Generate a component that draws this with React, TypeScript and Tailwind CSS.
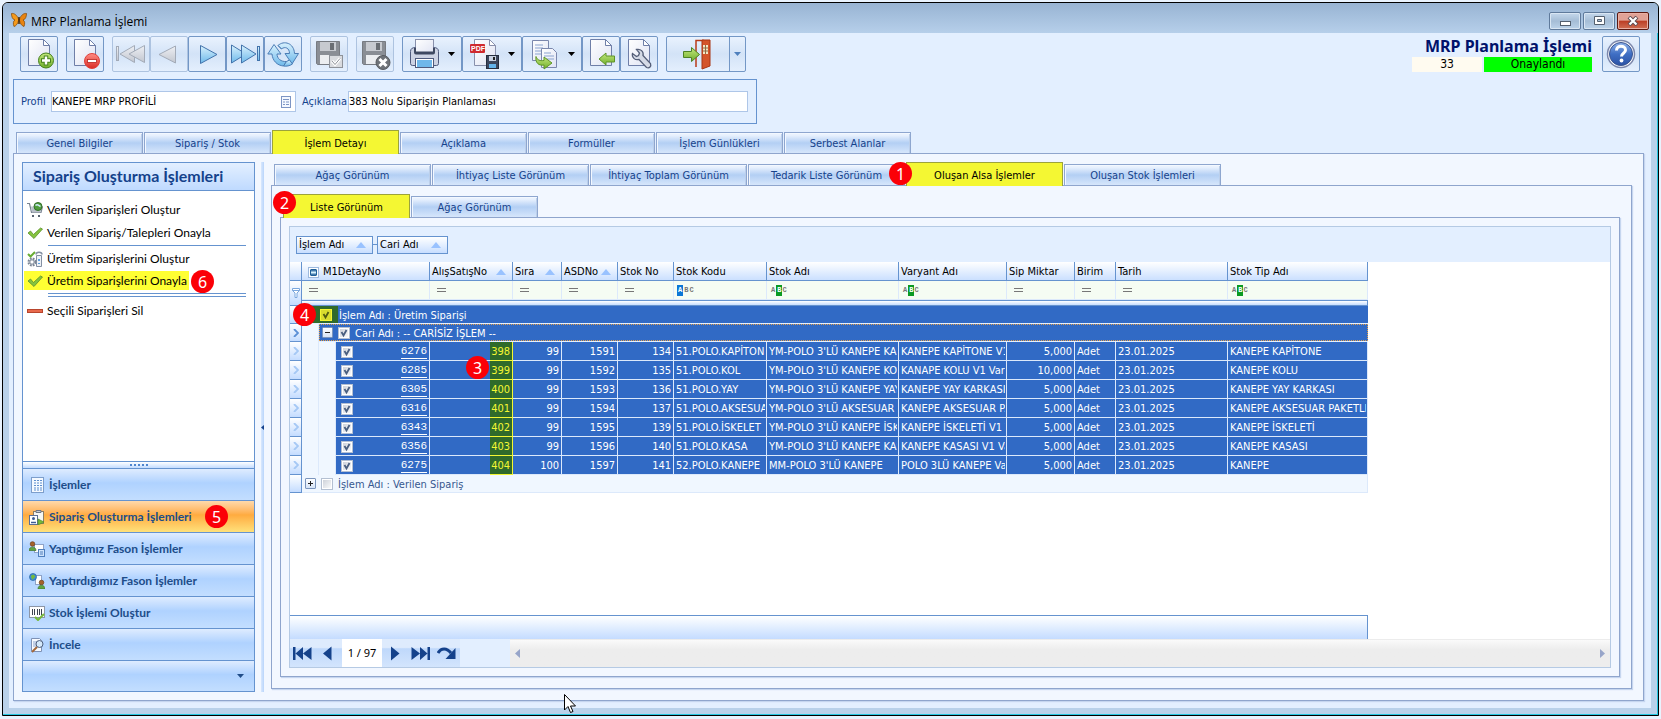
import { useState } from 'react'
import type { ReactNode } from 'react'
import clsx from 'clsx'

const mainTabs = [
  'Genel Bilgiler',
  'Sipariş / Stok',
  'İşlem Detayı',
  'Açıklama',
  'Formüller',
  'İşlem Günlükleri',
  'Serbest Alanlar',
]

const viewTabs = [
  'Ağaç Görünüm',
  'İhtiyaç Liste Görünüm',
  'İhtiyaç Toplam Görünüm',
  'Tedarik Liste Görünüm',
  'Oluşan Alsa İşlemler',
  'Oluşan Stok İşlemleri',
]

interface OrderRow {
  detayNo: number
  alisSatisNo: number
  sira: number
  asdNo: number
  stokNo: number
  stokKodu: string
  stokAdi: string
  varyant: string
  miktar: string
  tip: string
}

const rows: OrderRow[] = [
  { detayNo: 6276, alisSatisNo: 398, sira: 99, asdNo: 1591, stokNo: 134, stokKodu: '51.POLO.KAPİTON', stokAdi: "YM-POLO 3'LÜ KANEPE KAP", varyant: 'KANEPE KAPİTONE V1', miktar: '5,000', tip: 'KANEPE KAPİTONE' },
  { detayNo: 6285, alisSatisNo: 399, sira: 99, asdNo: 1592, stokNo: 135, stokKodu: '51.POLO.KOL', stokAdi: "YM-POLO 3'LÜ KANEPE KOL", varyant: 'KANAPE KOLU V1 Var', miktar: '10,000', tip: 'KANEPE KOLU' },
  { detayNo: 6305, alisSatisNo: 400, sira: 99, asdNo: 1593, stokNo: 136, stokKodu: '51.POLO.YAY', stokAdi: "YM-POLO 3'LÜ KANEPE YAY", varyant: 'KANEPE YAY KARKASI', miktar: '5,000', tip: 'KANEPE YAY KARKASI' },
  { detayNo: 6316, alisSatisNo: 401, sira: 99, asdNo: 1594, stokNo: 137, stokKodu: '51.POLO.AKSESUA', stokAdi: "YM-POLO 3'LÜ AKSESUAR Y", varyant: 'KANEPE AKSESUAR PA', miktar: '5,000', tip: 'KANEPE AKSESUAR PAKETLE' },
  { detayNo: 6343, alisSatisNo: 402, sira: 99, asdNo: 1595, stokNo: 139, stokKodu: '51.POLO.İSKELET', stokAdi: "YM-POLO 3'LÜ KANEPE İSK", varyant: 'KANEPE İSKELETİ V1 V', miktar: '5,000', tip: 'KANEPE İSKELETİ' },
  { detayNo: 6356, alisSatisNo: 403, sira: 99, asdNo: 1596, stokNo: 140, stokKodu: '51.POLO.KASA', stokAdi: "YM-POLO 3'LÜ KANEPE KAS", varyant: 'KANEPE KASASI V1 Va', miktar: '5,000', tip: 'KANEPE KASASI' },
  { detayNo: 6275, alisSatisNo: 404, sira: 100, asdNo: 1597, stokNo: 141, stokKodu: '52.POLO.KANEPE', stokAdi: "MM-POLO 3'LÜ KANEPE", varyant: 'POLO 3LÜ KANEPE Va', miktar: '5,000', tip: 'KANEPE' },
]

type FilterKind = 'eq' | 'starts' | 'contains'

const columns: { title: string; sorted?: boolean; filter: FilterKind }[] = [
  { title: 'AlışSatışNo', sorted: true, filter: 'eq' },
  { title: 'Sıra', sorted: true, filter: 'eq' },
  { title: 'ASDNo', sorted: true, filter: 'eq' },
  { title: 'Stok No', filter: 'eq' },
  { title: 'Stok Kodu', filter: 'starts' },
  { title: 'Stok Adı', filter: 'contains' },
  { title: 'Varyant Adı', filter: 'contains' },
  { title: 'Sip Miktar', filter: 'eq' },
  { title: 'Birim', filter: 'eq' },
  { title: 'Tarih', filter: 'eq' },
  { title: 'Stok Tip Adı', filter: 'contains' },
]

/* ---------- shared gradients for the drawings ---------- */

const Defs = () => (
  <svg width="0" height="0" className="absolute" aria-hidden="true">
    <defs>
      <linearGradient id="paper" x1="0" y1="0" x2="1" y2="1">
        <stop offset="0" stopColor="#ffffff" />
        <stop offset="1" stopColor="#dfe3f3" />
      </linearGradient>
      <linearGradient id="sky" x1="0" y1="0" x2="0" y2="1">
        <stop offset="0" stopColor="#d9f1fd" />
        <stop offset="1" stopColor="#6db9ea" />
      </linearGradient>
      <linearGradient id="ash" x1="0" y1="0" x2="0" y2="1">
        <stop offset="0" stopColor="#eef0f4" />
        <stop offset="1" stopColor="#c2c6cf" />
      </linearGradient>
      <linearGradient id="leaf" x1="0" y1="0" x2="0" y2="1">
        <stop offset="0" stopColor="#c4e87c" />
        <stop offset="1" stopColor="#6fae2c" />
      </linearGradient>
      <linearGradient id="rose" x1="0" y1="0" x2="0" y2="1">
        <stop offset="0" stopColor="#ff8d85" />
        <stop offset="1" stopColor="#d92b25" />
      </linearGradient>
      <linearGradient id="orb" x1="0" y1="0" x2="0" y2="1">
        <stop offset="0" stopColor="#8fb2ea" />
        <stop offset="0.5" stopColor="#3f6fc4" />
        <stop offset="1" stopColor="#2b52a4" />
      </linearGradient>
    </defs>
  </svg>
)

const Icon = ({ children }: { children: ReactNode }) => (
  <svg width="32" height="32" viewBox="0 0 32 32" fill="none" className="shrink-0" aria-hidden="true">
    {children}
  </svg>
)

const Page = () => (
  <>
    <path d="M5.500 1.500h15l6 6v20h-21z" fill="url(#paper)" stroke="#6f7fa8" />
    <path d="M20.500 1.500v6h6z" fill="#fff" stroke="#6f7fa8" strokeLinejoin="round" />
  </>
)

const NewIcon = () => (
  <Icon>
    <Page />
    <circle cx="23" cy="22.500" r="7.500" fill="url(#leaf)" stroke="#44801c" />
    <path d="M23 17.500v10M18 22.500h10" stroke="#47821f" strokeWidth="4.500" />
    <path d="M23 18.500v8M19 22.500h8" stroke="#fff" strokeWidth="2.500" />
  </Icon>
)

const DeleteIcon = () => (
  <Icon>
    <Page />
    <circle cx="23" cy="23" r="7.500" fill="url(#rose)" stroke="#e0403a" />
    <rect x="18.500" y="21.500" width="9" height="3" fill="#fff" stroke="#b8231f" strokeWidth="0.800" />
  </Icon>
)

const FirstIcon = () => (
  <Icon>
    <g fill="url(#ash)" stroke="#a3abb8">
      <rect x="1.500" y="8.500" width="2" height="14" />
      <path d="M19.500 7.500v17L5 16z" />
      <path d="M29.500 7.500v17L14 16z" />
    </g>
  </Icon>
)

const PrevIcon = () => (
  <Icon>
    <path d="M22.500 8v17L6 16.500z" fill="url(#ash)" stroke="#a3abb8" />
  </Icon>
)

const NextIcon = () => (
  <Icon>
    <path d="M9.500 7.500v18L26 16.500z" fill="url(#sky)" stroke="#4273ab" />
  </Icon>
)

const LastIcon = () => (
  <Icon>
    <g fill="url(#sky)" stroke="#4273ab">
      <path d="M2.500 7v18L17 16z" />
      <path d="M12.500 7v18L27 16z" />
      <rect x="28.500" y="8.500" width="2" height="14" />
    </g>
  </Icon>
)

const RefreshIcon = () => (
  <Icon>
    <g fill="url(#sky)" stroke="#4b7db5" strokeLinejoin="round">
      <path d="M7 6.500.8 16H5c.5 6.500 5 11.500 11.500 12l3-4.500C14 24 10 20.500 10 16h4z" />
      <path d="M11 7.500C17 2 27 5 27.500 15.500h4L25 26l-7-10.500h4.500C22.500 10 18 8 14.500 11z" />
      <path d="m16.500 28 3-4.500 3-1.500 3 4c-3 2-6 2.500-9 2z" />
      <path d="m11 7.500 3.500 3.500" />
    </g>
  </Icon>
)

const Floppy = () => (
  <>
    <path d="M3.500 3.500h23v22l-1 1h-21l-1-1z" fill="#8a8e95" stroke="#777b82" />
    <rect x="7" y="4" width="16" height="9" fill="#c7cad0" />
    <rect x="17" y="5" width="4" height="7" fill="#6a6e74" />
    <rect x="7" y="17" width="16" height="9" fill="#eceef1" />
  </>
)

const SaveIcon = () => (
  <Icon>
    <Floppy />
    <rect x="16.500" y="17.500" width="13" height="12" fill="#d9dbdf" stroke="#8e9299" />
    <path d="m19 23 3 3.500 5-6" stroke="#fff" strokeWidth="3" />
    <path d="m19 23 3 3.500 5-6" stroke="#8e9299" />
  </Icon>
)

const CancelSaveIcon = () => (
  <Icon>
    <Floppy />
    <circle cx="24" cy="24.500" r="7" fill="#6e7278" stroke="#585b60" />
    <path d="m20.500 21 7 7m0-7-7 7" stroke="#fff" strokeWidth="3" />
  </Icon>
)

const PrintIcon = () => (
  <Icon>
    <rect x="6.500" y="1.500" width="18" height="14" fill="url(#paper)" stroke="#8890ac" />
    <path d="M1.500 13.500q0-4 5-4v5h18v-5q5 0 5 4v12q0 2-2 2h-24q-2 0-2-2z" fill="#cdd3e4" stroke="#4f5a7d" />
    <path d="M5 10h2v3.500h17V10h2v4.500q0 2-2 2H7q-2 0-2-2z" fill="#3e4861" />
    <rect x="6.500" y="20.500" width="18" height="9" fill="#fff" stroke="#4f5a7d" />
    <rect x="8" y="22" width="15" height="7" fill="#6fb7ea" />
  </Icon>
)

const PdfIcon = () => (
  <Icon>
    <path d="M5.500 1.500h15l6 6v20h-21z" fill="url(#paper)" stroke="#8890ac" />
    <path d="M20.500 1.500v6h6z" fill="#fff" stroke="#8890ac" />
    <rect x="1" y="6" width="15" height="9" rx="1" fill="#cf2a2f" />
    <text x="2" y="13" fontSize="7" fontWeight="700" fill="#fff" fontFamily="Liberation Sans, sans-serif">PDF</text>
    <rect x="17.500" y="17.500" width="12" height="13" fill="#3c475d" stroke="#252d3d" />
    <rect x="20" y="18" width="7" height="5" fill="#c9d2e2" />
    <rect x="24" y="19" width="2" height="3" fill="#222" />
    <rect x="20" y="26" width="7" height="4" fill="#63b3ea" />
  </Icon>
)

const CopyIcon = () => (
  <Icon>
    <path d="M3.500 2.500h16v20h-16z" fill="url(#paper)" stroke="#7b87ad" />
    <path d="M6 7h8M6 10h8M6 13h6M6 16h6" stroke="#8aa3cf" />
    <path d="M12.500 10.500h11l4 4v15h-15z" fill="url(#paper)" stroke="#7b87ad" />
    <path d="M15 15h7M15 18h10M15 21h10" stroke="#8aa3cf" />
    <path d="M7 18.500c1 4 5 4.500 8 4V19l8 6-8 6v-4c-5 1-9-2-8-8.500z" fill="url(#leaf)" stroke="#5e9426" />
  </Icon>
)

const ImportIcon = () => (
  <Icon>
    <Page />
    <path d="m14 21 7-6v3h8.500v6H21v3z" fill="url(#leaf)" stroke="#5e9426" />
  </Icon>
)

const WrenchIcon = () => (
  <Icon>
    <Page />
    <path
      d="M13.500 11.500c4-1 7.500 2 6.500 6l7.500 8c1 3-1 5-4 4l-7.500-8c-4 1-7.500-2-6.500-6l4 3 2-1 1-2.500z"
      fill="#d5dae6"
      stroke="#545e78"
      strokeWidth="1.300"
    />
  </Icon>
)

const ExitIcon = () => (
  <Icon>
    <path d="M14 29V2.500h8" stroke="#b83a17" strokeWidth="1.500" />
    <path d="M20 2h8v26l-8 3z" fill="#d4542a" stroke="#a83413" />
    <path d="M21 7h5v9h-5z" fill="#f4e5c4" />
    <path d="M23.500 7v9M21 10h5M21 13h5" stroke="#8d6b45" />
    <path d="M1.500 13.500h8v-4l8 7-8 7v-4h-8z" fill="url(#leaf)" stroke="#4d8224" />
  </Icon>
)

const HelpIcon = () => (
  <Icon>
    <circle cx="16" cy="16" r="13.500" fill="#fff" stroke="#7d88ac" strokeWidth="1.500" />
    <circle cx="16" cy="16" r="11.500" fill="url(#orb)" stroke="#3b558f" />
    <path d="M11.500 12.500c0-6 9-5.500 9-.5 0 3.500-4 3-4 6.500" stroke="#fff" strokeWidth="3" />
    <circle cx="16.500" cy="22.500" r="1.900" fill="#fff" />
  </Icon>
)

/* ---------- sidebar icons (16px) ---------- */

const Small = ({ children }: { children: ReactNode }) => (
  <svg width="16" height="16" viewBox="0 0 16 16" fill="none" className="shrink-0" aria-hidden="true">
    {children}
  </svg>
)

const CartIcon = () => (
  <Small>
    <path d="M0 1.500h2.500l2 9h9.500l1.500-6" stroke="#7a8491" strokeWidth="1.200" />
    <path d="M4 4.500h11l-1.500 6H5z" fill="#b9c0ca" />
    <circle cx="11" cy="4.500" r="4" fill="#4f9e3c" stroke="#356d2b" />
    <path d="M8.500 3.500c2-2 3 0 5 1" stroke="#cfeaf9" strokeWidth="1.500" />
    <rect x="5" y="13" width="2" height="2" fill="#55606f" />
    <rect x="11" y="13" width="2" height="2" fill="#55606f" />
  </Small>
)

const TickIcon = () => (
  <Small>
    <path d="m1 8 2.500-2 3 3.500L13.500 3l2 1-8.500 9.500z" fill="#86c440" stroke="#5a8f2b" strokeWidth="0.800" />
  </Small>
)

const GearListIcon = () => (
  <Small>
    <circle cx="5" cy="11" r="3.500" stroke="#7a8594" strokeWidth="2" strokeDasharray="1.800 1" />
    <circle cx="5" cy="11" r="2.200" stroke="#7a8594" />
    <path d="m1 3 2.500 2.500L8 1" stroke="#68ac33" strokeWidth="2" />
    <path d="M9.500 4.500h5v11h-5z" fill="#eef1f6" stroke="#8490a3" />
    <path d="M9 3.500c0-3 6-3 6 0" stroke="#8490a3" strokeWidth="1.500" />
    <path d="M11 8h2v2h-2zM11 12h2v1h-2z" fill="#5d9fdf" />
  </Small>
)

const MinusIcon = () => (
  <Small>
    <rect x="0.500" y="6.500" width="15" height="3" fill="#e8694c" stroke="#b8452d" />
  </Small>
)

const ListIcon = () => (
  <Small>
    <rect x="2.500" y="0.500" width="12" height="15" fill="#f4f9ff" stroke="#7d9ecb" />
    <path d="M5 3.500h8M5 6h8M5 8.500h8M5 11h8M5 13h8" stroke="#5f8fcf" strokeDasharray="2 1" />
  </Small>
)

const ClipboardIcon = () => (
  <Small>
    <rect x="4.500" y="2.500" width="10" height="12" fill="#f6f6f2" stroke="#8b7d63" />
    <path d="M7 3.500V1.500h5v2z" fill="#c9ccd3" stroke="#6e7686" />
    <rect x="0.500" y="6.500" width="8" height="9" fill="#fff" stroke="#5c6f94" />
    <circle cx="4.500" cy="9.500" r="1.500" fill="#3d5d94" />
    <path d="M2 13.500h5" stroke="#3d5d94" strokeWidth="1.500" />
    <path d="m9 10 6 3-6 3z" fill="#76b93b" stroke="#4e8b25" strokeWidth="0.700" />
  </Small>
)

const PersonDocIcon = () => (
  <Small>
    <rect x="5.500" y="3.500" width="9" height="8" fill="#fff" stroke="#8fa3c7" />
    <circle cx="3.500" cy="3" r="2.300" fill="#a5622b" stroke="#6f3d17" strokeWidth="0.700" />
    <path d="M0 9.500C0 5 7 5 7 9.500z" fill="#5fa542" stroke="#3e7629" strokeWidth="0.700" />
    <rect x="9.500" y="8.500" width="6" height="7" fill="#cfe3fb" stroke="#4f7fbd" />
    <path d="M11 11h3M11 13h3" stroke="#4f7fbd" />
  </Small>
)

const GlobePersonIcon = () => (
  <Small>
    <rect x="6.500" y="2.500" width="6" height="9" fill="#fff" stroke="#8fa3c7" />
    <circle cx="4" cy="4" r="3.500" fill="#3d8dd8" stroke="#26629f" strokeWidth="0.700" />
    <path d="M2 3c2-2 3-1 4 0s-2 2-2 4c-1-1-2-2-2-4z" fill="#76b93b" />
    <circle cx="12.500" cy="9.500" r="2.300" fill="#a5622b" stroke="#6f3d17" strokeWidth="0.700" />
    <path d="M9 16c0-5 7-5 7 0z" fill="#5fa542" stroke="#3e7629" strokeWidth="0.700" />
  </Small>
)

const BarcodeIcon = () => (
  <Small>
    <rect x="0.500" y="1.500" width="15" height="11" fill="#fff" stroke="#8d96a6" />
    <path d="M3.500 4v6M5.500 4v6M8.500 4v6M10.500 4v6M12.500 4v6" stroke="#3c4350" />
    <path d="m6 12 3 3 6-6" stroke="#76b93b" strokeWidth="2" />
  </Small>
)

const MagnifyIcon = () => (
  <Small>
    <path d="M2.500 1.500h8l2 2v11h-10z" fill="#f7faff" stroke="#7f92b5" />
    <path d="M4 5h4M4 7h3M4 9h3" stroke="#8fa7cf" />
    <circle cx="10.500" cy="7" r="3.500" fill="#d5e9fb" stroke="#4c5d7d" />
    <path d="m8 10-5 5" stroke="#a3673a" strokeWidth="2" />
  </Small>
)

/* ---------- small parts ---------- */

const Marker = ({ n, className }: { n: number; className: string }) => (
  <span
    className={clsx(
      "absolute z-20 flex h-[23px] w-[23px] items-center justify-center rounded-full bg-[#fb0007] font-['Noto_Sans',sans-serif] text-[16px] leading-none font-normal text-white",
      className
    )}
  >
    {n}
  </span>
)

const Caret = ({ color = '#000' }: { color?: string }) => (
  <svg width="7" height="4" viewBox="0 0 7 4" className="shrink-0" aria-hidden="true">
    <path d="M0 0h7L3.500 4z" fill={color} />
  </svg>
)

const SortArrow = () => (
  <svg width="10" height="6" viewBox="0 0 10 6" className="shrink-0" aria-hidden="true">
    <path d="M0 6h10L5 0z" fill="#99c2ff" />
  </svg>
)

interface ToolButtonProps {
  label: string
  children: ReactNode
  disabled?: boolean
  wide?: boolean
}

const ToolButton = ({ label, children, disabled, wide }: ToolButtonProps) => (
  <button
    type="button"
    aria-label={label}
    disabled={disabled}
    className={clsx(
      'flex h-9 items-center justify-center rounded-[2px] border bg-linear-to-b from-[#e9f2fe] via-[#d3e3f7] to-[#e4effd]',
      wide ? 'w-[60px] gap-[7px]' : 'w-[38px]',
      disabled ? 'border-[#adc3e0]' : 'border-[#7397c6]'
    )}
  >
    {children}
    {wide && <Caret />}
  </button>
)

interface TabProps {
  label: string
  active: boolean
  onClick: () => void
  wide?: boolean
}

const Tab = ({ label, active, onClick, wide }: TabProps) => (
  <button
    type="button"
    role="tab"
    aria-selected={active}
    onClick={onClick}
    className={clsx(
      'shrink-0 border border-b-0 pt-[2px] text-center',
      wide ? 'w-[157px]' : 'w-[127px]',
      active
        ? 'relative -mb-px h-6 border-[#9ca33c] bg-[#f4f733] text-black'
        : 'h-[21px] border-[#8ea6cf] bg-linear-to-b from-[#eaf2fe] from-10% via-[#b3cff4] via-50% to-[#d6e6fb] text-[#15428b] shadow-[inset_1px_1px_0_#f3f8ff,inset_-1px_0_0_#bccfea]'
    )}
  >
    {label}
  </button>
)

interface CheckProps {
  label: string
  checked?: boolean
  yellow?: boolean
}

const Check = ({ label, checked = false, yellow }: CheckProps) => (
  <span className="relative block h-3 w-3 shrink-0">
    <input
      type="checkbox"
      aria-label={label}
      defaultChecked={checked}
      className={clsx(
        'peer block h-3 w-3 appearance-none border',
        yellow
          ? 'border-[#f4f733] bg-[#d9dc2e]'
          : 'border-[#b4c0d2] bg-linear-to-br from-[#c9ced6] to-white shadow-[inset_0_0_0_1px_#fff]'
      )}
    />
    <svg viewBox="0 0 12 12" className="pointer-events-none absolute inset-0 hidden peer-checked:block" aria-hidden="true">
      <path d="m3.500 5 2 3.500L8.500 3" stroke={yellow ? '#4f5a12' : '#4a5f80'} strokeWidth="1.800" fill="none" />
    </svg>
  </span>
)

const FilterMark = ({ kind }: { kind: FilterKind }) => {
  if (kind === 'eq') {
    return (
      <svg width="9" height="4" viewBox="0 0 9 4" className="ml-[7px]" aria-hidden="true">
        <path d="M0 .5h9M0 3.500h9" stroke="#777" />
      </svg>
    )
  }
  return (
    <span className="ml-[3px] flex items-center font-['Liberation_Mono',monospace] text-[7px] leading-[11px] font-bold text-[#777]">
      <span className={clsx('px-px', kind === 'starts' && 'bg-[#0b77d6] text-white')}>A</span>
      <span className={clsx('px-px', kind === 'contains' && 'bg-[#0a9a22] text-white')}>B</span>
      <span>C</span>
    </span>
  )
}

const Chevron = ({ current }: { current?: boolean }) => (
  <svg width="6" height="8" viewBox="0 0 6 8" className="mx-auto" aria-hidden="true">
    <path d="m1 0 4 4-4 4" stroke={current ? '#5b8fd6' : '#a5c8f5'} strokeWidth="1.800" fill="none" />
  </svg>
)

const Indicator = ({ arrow, current }: { arrow?: boolean; current?: boolean }) => (
  <td className="border-r border-b border-[#6593cf] bg-linear-to-b from-white to-[#c4dcff]">
    {arrow && <Chevron current={current} />}
  </td>
)

const Expander = ({ open }: { open?: boolean }) => (
  <button
    type="button"
    aria-label={open ? 'Daralt' : 'Genişlet'}
    className="flex h-[11px] w-[11px] shrink-0 items-center justify-center rounded-[1px] border border-[#7b95bd] bg-linear-to-b from-white to-[#d5e3f6]"
  >
    <svg width="7" height="7" viewBox="0 0 7 7" aria-hidden="true">
      <path d={open ? 'M1 3.500h5' : 'M1 3.500h5M3.500 1v5'} stroke="#222" />
    </svg>
  </button>
)

/* ---------- window sections ---------- */

const captionButton =
  'flex h-[18px] w-8 items-center justify-center rounded-[2px] border border-[#5f7a9b] bg-linear-to-b from-[#c5d8ec] via-[#a5bdd6] to-[#bcd3ea] shadow-[inset_0_0_0_1px_#d9e6f3]'

const TitleBar = () => (
  <header className="flex h-[30px] shrink-0 items-center bg-linear-to-b from-[#98b4d3] to-[#b6cfea] pl-2">
    <svg width="16" height="16" viewBox="0 0 16 16" className="mt-1" aria-hidden="true">
      <path d="M7.500 7C6 3 3 1 .5 1.500c0 3 1 6 3.500 6.500-2 1-2 4-1 6.500 2-.5 4-3 4.500-6z" fill="#f59a1b" stroke="#8a4c08" strokeWidth="0.800" />
      <path d="M8.500 7c1.500-4 4.500-6 7-5.500 0 3-1 6-3.500 6.500 2 1 2 4 1 6.500-2-.5-4-3-4.500-6z" fill="#e98410" stroke="#8a4c08" strokeWidth="0.800" />
      <path d="M8 5v7" stroke="#4b2803" strokeWidth="1.500" />
    </svg>
    <h1 className="ml-1 pt-2 font-['Open_Sans',sans-serif] text-[12px] text-black">MRP Planlama İşlemi</h1>
    <div className="mr-[9px] ml-auto flex gap-[2px] pt-[5px]">
      <button type="button" aria-label="Küçült" className={captionButton}>
        <svg width="11" height="12" viewBox="0 0 11 12"><rect x="0.500" y="6.500" width="10" height="4" fill="#fff" stroke="#54606f" /></svg>
      </button>
      <button type="button" aria-label="Ekranı Kapla" className={captionButton}>
        <svg width="11" height="9" viewBox="0 0 11 9"><path d="M.5.5h10v8H.5zM3.500 3.500h4v2h-4z" fill="#fff" fillRule="evenodd" stroke="#54606f" /></svg>
      </button>
      <button type="button" aria-label="Kapat" className="flex h-[18px] w-8 items-center justify-center rounded-[2px] border border-[#5c1a12] bg-linear-to-b from-[#e0a296] from-45% via-[#bb3d24] via-50% to-[#cf6d52] shadow-[inset_0_0_0_1px_#e9b0a4]">
        <svg width="12" height="10" viewBox="0 0 12 10">
          <path d="m2 1 8 8M10 1 2 9" stroke="#5d4a50" strokeWidth="4" />
          <path d="m2.500 1.500 7 7M9.500 1.500l-7 7" stroke="#fff" strokeWidth="2.200" />
        </svg>
      </button>
    </div>
  </header>
)

const Toolbar = () => (
  <div className="flex items-start gap-2 pr-1 pl-[7px]">
    <ToolButton label="Yeni"><NewIcon /></ToolButton>
    <ToolButton label="Sil"><DeleteIcon /></ToolButton>
    <div className="flex">
      <ToolButton label="İlk" disabled><FirstIcon /></ToolButton>
      <ToolButton label="Önceki" disabled><PrevIcon /></ToolButton>
      <ToolButton label="Sonraki"><NextIcon /></ToolButton>
      <ToolButton label="Son"><LastIcon /></ToolButton>
      <ToolButton label="Yenile"><RefreshIcon /></ToolButton>
    </div>
    <ToolButton label="Kaydet" disabled><SaveIcon /></ToolButton>
    <ToolButton label="Vazgeç" disabled><CancelSaveIcon /></ToolButton>
    <div className="flex">
      <ToolButton label="Yazdır" wide><PrintIcon /></ToolButton>
      <ToolButton label="PDF Kaydet" wide><PdfIcon /></ToolButton>
      <ToolButton label="Kopyala" wide><CopyIcon /></ToolButton>
      <ToolButton label="İçeri Al"><ImportIcon /></ToolButton>
      <ToolButton label="Ayarlar"><WrenchIcon /></ToolButton>
    </div>
    <div className="flex h-9 rounded-[2px] border border-[#7397c6] bg-linear-to-b from-[#e9f2fe] via-[#d3e3f7] to-[#e4effd]">
      <button type="button" aria-label="Çıkış" className="flex w-[62px] items-center justify-center"><ExitIcon /></button>
      <button type="button" aria-label="Çıkış seçenekleri" className="flex w-4 items-center justify-center border-l border-[#7397c6]">
        <Caret color="#4f80bd" />
      </button>
    </div>
    <div className="ml-auto flex gap-[10px]">
      <div className="w-[180px]">
        <h2 className="h-[21px] text-right font-['Noto_Sans',sans-serif] text-[16px] leading-[20px] font-bold text-[#00126b]">MRP Planlama İşlemi</h2>
        <div className="flex gap-[2px] text-center text-[12px] leading-[15px] text-black">
          <span className="w-[70px] bg-[#fffbf0]">33</span>
          <span className="flex-1 bg-[#00ff00]">Onaylandı</span>
        </div>
      </div>
      <ToolButton label="Yardım"><HelpIcon /></ToolButton>
    </div>
  </div>
)

const ProfilePanel = () => (
  <div className="mt-[7px] flex h-[45px] w-[744px] items-center border border-[#6593cf] pl-[7px] text-[#15428b]">
    <label htmlFor="profil" className="w-[30px] shrink-0">Profil</label>
    <div className="flex h-[21px] w-[245px] shrink-0 items-center border border-[#aec6e8] bg-white pr-1">
      <input id="profil" defaultValue="KANEPE MRP PROFİLİ" className="h-full min-w-0 flex-1 bg-transparent text-black outline-none" />
      <button type="button" aria-label="Profil seç">
        <svg width="10" height="12" viewBox="0 0 10 12">
          <rect x="0.500" y="0.500" width="9" height="11" fill="#f4f8ff" stroke="#7d95c4" />
          <path d="M2 3.500h6M2 6h2M5 6h3M2 8.500h2M5 8.500h3" stroke="#7d95c4" />
        </svg>
      </button>
    </div>
    <label htmlFor="aciklama" className="ml-[6px] w-[46px] shrink-0">Açıklama</label>
    <input
      id="aciklama"
      defaultValue="383 Nolu Siparişin Planlaması"
      className="h-[21px] w-[400px] shrink-0 border border-[#aec6e8] bg-white text-black outline-none"
    />
  </div>
)

const navItems = [
  { label: 'İşlemler', icon: <ListIcon /> },
  { label: 'Sipariş Oluşturma İşlemleri', icon: <ClipboardIcon />, active: true },
  { label: 'Yaptığımız Fason İşlemler', icon: <PersonDocIcon /> },
  { label: 'Yaptırdığımız Fason İşlemler', icon: <GlobePersonIcon /> },
  { label: 'Stok İşlemi Oluştur', icon: <BarcodeIcon /> },
  { label: 'İncele', icon: <MagnifyIcon /> },
]

const navShade = 'bg-linear-to-b from-[#dfecff] from-0% via-[#afd2ff] via-45% to-[#c3deff]'

const Sidebar = () => (
  <aside className="flex w-[233px] shrink-0 flex-col border border-[#6593cf] bg-white font-['Lato',sans-serif] text-[12px]">
    <h2 className="h-7 border-b border-[#6593cf] bg-linear-to-b from-[#e3efff] to-[#bfdaff] pl-[10px] text-[16px] leading-[26px] font-bold text-[#15428b]">
      Sipariş Oluşturma İşlemleri
    </h2>
    <div className="flex flex-1 flex-col pt-[7px] text-black">
      <button type="button" className="flex h-[23px] items-center gap-1 pl-1"><CartIcon />Verilen Siparişleri Oluştur</button>
      <button type="button" className="flex h-[23px] items-center gap-1 pl-1"><TickIcon />Verilen Sipariş/Talepleri Onayla</button>
      <div className="mt-px mr-2 ml-[25px] border-t border-[#6593cf]" />
      <button type="button" className="mt-px flex h-[23px] items-center gap-1 pl-1"><GearListIcon />Üretim Siparişlerini Oluştur</button>
      <div className="relative mt-px flex">
        <button type="button" className="ml-px flex h-[19px] w-[165px] items-center gap-1 bg-[#ffff33] pl-[3px] whitespace-nowrap"><TickIcon />Üretim Siparişlerini Onayla</button>
        <Marker n={6} className="-top-px left-[168px]" />
      </div>
      <div className="mt-[3px] mr-2 ml-[25px] h-1 border-y border-[#6593cf]" />
      <button type="button" className="mt-[2px] flex h-[23px] items-center gap-1 pl-1"><MinusIcon />Seçili Siparişleri Sil</button>
    </div>
    <div className="flex h-[7px] items-center justify-center gap-[2px] border-t border-[#6593cf] bg-linear-to-b from-white to-[#c3dcff]">
      {[0, 1, 2, 3, 4].map((dot) => (
        <span key={dot} className="h-[2px] w-[2px] bg-[#4f86cf]" />
      ))}
    </div>
    <nav>
      {navItems.map((item) => (
        <button
          key={item.label}
          type="button"
          className={clsx(
            'relative flex h-8 w-full items-center gap-1 border-t border-[#6593cf] pl-[6px] font-bold text-[#204d89]',
            item.active ? 'bg-linear-to-b from-[#ffd9aa] from-0% via-[#ffab3f] via-45% to-[#fee17a]' : navShade
          )}
        >
          {item.icon}
          {item.label}
          {item.active && <Marker n={5} className="top-1 left-[182px]" />}
        </button>
      ))}
      <div className={clsx('flex h-[31px] items-center justify-end border-t border-[#6593cf] pr-[10px]', navShade)}>
        <button type="button" aria-label="Düğmeleri yapılandır"><Caret color="#204d89" /></button>
      </div>
    </nav>
  </aside>
)

const cellLine = 'border-r border-b border-[#dce9fb] whitespace-nowrap overflow-hidden'
const textCell = 'mr-px overflow-hidden pt-[2px] pl-[2px]'
const numberCell = 'pt-[2px] pr-[2px] text-right'

const OrdersTable = () => (
  <table className="w-[1078px] table-fixed border-separate border-spacing-0 text-left [&_td]:p-0 [&_th]:p-0 [&_th]:font-normal">
    <colgroup>
      <col className="w-3" />
      <col className="w-[17px]" />
      <col className="w-[17px]" />
      <col className="w-[94px]" />
      <col className="w-[83px]" />
      <col className="w-[49px]" />
      <col className="w-[56px]" />
      <col className="w-[56px]" />
      <col className="w-[93px]" />
      <col className="w-[132px]" />
      <col className="w-[108px]" />
      <col className="w-[68px]" />
      <col className="w-[41px]" />
      <col className="w-[112px]" />
      <col className="w-[140px]" />
    </colgroup>
    <thead>
      <tr className="h-[19px] bg-linear-to-b from-white to-[#c8deff] text-black">
        <th className="border-r border-b border-[#6593cf]" />
        <th colSpan={3} className="border-r border-b border-[#6593cf]">
          <div className="flex items-center gap-1 pt-[2px] pl-[6px]">
            <button type="button" aria-label="Kolonlar" className="flex h-[11px] w-[11px] items-center justify-center border border-[#9db9de] bg-white">
              <span className="h-[7px] w-[7px] rounded-[1px] border border-[#1f5f98] bg-linear-to-b from-[#1f5f98] via-[#d6f1fb] to-[#1f5f98]" />
            </button>
            M1DetayNo
          </div>
        </th>
        {columns.map((col) => (
          <th key={col.title} className="border-r border-b border-[#6593cf]">
            <div className="flex items-center justify-between pt-[2px] pr-[6px] pl-[2px] whitespace-nowrap">
              {col.title}
              {col.sorted && <SortArrow />}
            </div>
          </th>
        ))}
      </tr>
      <tr className="h-[19px] bg-[#f5fcf3]">
        <td rowSpan={2} className="border-r border-b border-[#6593cf] bg-linear-to-b from-white to-[#c4dcff]">
          <svg width="8" height="10" viewBox="0 0 8 10" className="mx-auto" aria-hidden="true">
            <path d="M.5.5h7v2L5 5v4.500H3V5L.5 2.500zM.5 2.500h7" stroke="#7ba7dd" fill="#fff" />
          </svg>
        </td>
        <td colSpan={3} className={cellLine}><FilterMark kind="eq" /></td>
        {columns.map((col) => (
          <td key={col.title} className={cellLine}><FilterMark kind={col.filter} /></td>
        ))}
      </tr>
      <tr className="h-[6px] text-[1px] leading-none">
        <td colSpan={14} className="border-y border-r border-[#6593cf] bg-linear-to-b from-white to-[#c4dcff]" />
      </tr>
    </thead>
    <tbody className="text-white">
      <tr className="h-[18px]">
        <Indicator />
        <td colSpan={14} className="relative border-b border-[#e3efff] bg-[#316ac5]">
          <div className="flex h-[17px] items-center">
            <div className="mr-px flex h-full w-[36px] items-center justify-end bg-[#2f6a2b] pr-[6px]">
              <Check label="İşlem Adı : Üretim Siparişi" checked yellow />
            </div>
            <span className="pt-[2px]">İşlem Adı : Üretim Siparişi</span>
          </div>
          <Marker n={4} className="-top-[3px] -left-[9px]" />
        </td>
      </tr>
      <tr className="h-[18px]">
        <Indicator arrow current />
        <td className="border-r border-[#dce9fb] bg-[#f0f7ff]" />
        <td colSpan={13} className="border-b border-[#e3efff] bg-[#316ac5]">
          <div className="flex h-[17px] items-center border border-dotted border-[#e6a04a] pl-[2px]">
            <Expander open />
            <span className="mr-[5px] ml-[5px]"><Check label="Cari Adı" checked /></span>
            <span className="pt-[2px]">Cari Adı : -- CARİSİZ İŞLEM --</span>
          </div>
        </td>
      </tr>
      {rows.map((row) => (
        <tr key={row.detayNo} className="h-[19px] [&>td:nth-child(n+4)]:bg-[#316ac5]">
          <Indicator arrow />
          <td className="border-r border-[#dce9fb] bg-[#f0f7ff]" />
          <td className="border-r border-[#dce9fb] bg-[#f0f7ff]" />
          <td className={cellLine}>
            <div className="flex items-center justify-between pt-[2px] pr-[2px] pl-[5px]">
              <Check label={`Detay ${row.detayNo}`} checked />
              <a href={`#detay-${row.detayNo}`} className="border-b border-white font-['Liberation_Mono',monospace] text-[11px] leading-[13px]">{row.detayNo}</a>
            </div>
          </td>
          <td className="relative">
            <div className="flex h-[19px] justify-end border-r border-[#f4f733]">
              <div className="flex-1 border-b border-[#dce9fb]" />
              <div className="w-[22px] border-b border-[#f4f733] bg-[#2f6a2b] pt-px pr-[2px] text-right leading-[17px] text-[#f4f733]">{row.alisSatisNo}</div>
            </div>
            {row.alisSatisNo === 399 && <Marker n={3} className="-top-[5px] left-[36px]" />}
          </td>
          <td className={cellLine}><div className={numberCell}>{row.sira}</div></td>
          <td className={cellLine}><div className={numberCell}>{row.asdNo}</div></td>
          <td className={cellLine}><div className={numberCell}>{row.stokNo}</div></td>
          <td className={cellLine}><div className={textCell}>{row.stokKodu}</div></td>
          <td className={cellLine}><div className={textCell}>{row.stokAdi}</div></td>
          <td className={cellLine}><div className={textCell}>{row.varyant}</div></td>
          <td className={cellLine}><div className={numberCell}>{row.miktar}</div></td>
          <td className={cellLine}><div className={textCell}>Adet</div></td>
          <td className={cellLine}><div className={textCell}>23.01.2025</div></td>
          <td className={cellLine}><div className={textCell}>{row.tip}</div></td>
        </tr>
      ))}
      <tr className="h-[18px]">
        <Indicator />
        <td colSpan={14} className="border-r border-b border-[#dce9fb] bg-[#f0f7ff] text-[#37588f]">
          <div className="flex items-center pl-[3px]">
            <Expander />
            <span className="mr-[5px] ml-[5px]"><Check label="İşlem Adı : Verilen Sipariş" /></span>
            <span className="pt-[2px]">İşlem Adı : Verilen Sipariş</span>
          </div>
        </td>
      </tr>
    </tbody>
  </table>
)

const Navigator = () => (
  <div className="flex h-7">
    <div className="flex w-[170px] items-center bg-linear-to-b from-[#deebfd] from-30% via-[#bfd8fb] via-35% to-[#d3e5fd] pl-[3px] text-[#15428b]">
      <button type="button" aria-label="İlk kayıt">
        <svg width="19" height="15" viewBox="0 0 19 15" fill="currentColor"><path d="M0 1h2.500v13H0zM2.500 7.500 10 1v13zM10 7.500 18.500 1v13z" /></svg>
      </button>
      <button type="button" aria-label="Önceki kayıt" className="ml-[11px]">
        <svg width="9" height="15" viewBox="0 0 9 15" fill="currentColor"><path d="M0 7.500 8.500.5v14z" /></svg>
      </button>
      <output className="ml-[10px] flex h-full w-10 items-center justify-center bg-white font-['Noto_Sans',sans-serif] text-[11px] text-black">1 / 97</output>
      <button type="button" aria-label="Sonraki kayıt" className="ml-[9px]">
        <svg width="9" height="15" viewBox="0 0 9 15" fill="currentColor"><path d="M8.500 7.500 0 .5v14z" /></svg>
      </button>
      <button type="button" aria-label="Son kayıt" className="ml-[11px]">
        <svg width="19" height="15" viewBox="0 0 19 15" fill="currentColor"><path d="M16.500 1H19v13h-2.500zM16.500 7.500 9 1v13zM9 7.500.5 1v13z" /></svg>
      </button>
      <button type="button" aria-label="Yenile" className="ml-[7px]">
        <svg width="19" height="15" viewBox="0 0 19 15" fill="none">
          <path d="M1 7C4 1.500 10 1.500 14 7" stroke="currentColor" strokeWidth="3" />
          <path d="M18.500 2v11H8.500z" fill="currentColor" />
        </svg>
      </button>
    </div>
    <div className="w-[50px] bg-[#e3efff]" />
    <div className="flex flex-1 items-center justify-between border-t border-[#ececec] bg-linear-to-b from-[#fafafa] to-[#ededed] to-35% px-[5px]">
      <button type="button" aria-label="Sola kaydır"><svg width="5" height="9" viewBox="0 0 5 9"><path d="M5 0v9L0 4.500z" fill="#97a5c9" /></svg></button>
      <button type="button" aria-label="Sağa kaydır"><svg width="5" height="9" viewBox="0 0 5 9"><path d="M0 0v9l5-4.500z" fill="#97a5c9" /></svg></button>
    </div>
  </div>
)

const OrdersGrid = () => (
  <div className="flex flex-1 flex-col border border-[#b5cae4] bg-white">
    <div className="flex h-[35px] items-center bg-[#e3efff] pl-[6px] text-black">
      <button type="button" className="flex h-[18px] w-[77px] items-center justify-between border border-[#6593cf] bg-linear-to-b from-white to-[#c8deff] pt-px pr-[6px] pl-[2px]">
        İşlem Adı
        <SortArrow />
      </button>
      <span className="h-px w-1 bg-[#6593cf]" />
      <button type="button" className="flex h-[18px] w-[71px] items-center justify-between border border-[#6593cf] bg-linear-to-b from-white to-[#c8deff] pt-px pr-[6px] pl-[2px]">
        Cari Adı
        <SortArrow />
      </button>
    </div>
    <OrdersTable />
    <div className="mt-auto h-6 w-[1078px] border-t border-r border-[#6593cf] bg-linear-to-b from-white to-[#c4dcff]" />
    <Navigator />
  </div>
)

const panel = 'border border-[#8fa5cd] bg-[#f2f7ff] shadow-[1px_1px_1px_#c6d6ef]'

const App = () => {
  const [mainTab, setMainTab] = useState('İşlem Detayı')
  const [viewTab, setViewTab] = useState('Oluşan Alsa İşlemler')
  const [listTab, setListTab] = useState('Liste Görünüm')

  return (
    <div className="relative flex min-h-screen bg-[#e9f3fe] px-[2px] pt-[2px] pb-[3px] font-['DejaVu_Sans_Condensed','Noto_Sans',sans-serif] text-[11px] leading-[14px]">
      <Defs />
      <div className="flex min-w-0 flex-1 flex-col overflow-hidden rounded-t-[6px] border border-black bg-[#b9d1ea] shadow-[inset_-1px_-1px_0_#25c6e0]">
        <TitleBar />
        <main className="mr-[7px] mb-[7px] ml-[6px] flex flex-1 flex-col bg-[#e3efff] pt-[3px] pr-[7px] pb-[7px] pl-1">
          <Toolbar />
          <ProfilePanel />
          <div role="tablist" className="mt-[6px] flex h-[23px] items-end gap-px pl-[3px]">
            {mainTabs.map((tab) => (
              <Tab key={tab} label={tab} active={tab === mainTab} onClick={() => setMainTab(tab)} />
            ))}
          </div>
          <div className={clsx('flex flex-1 py-2 pr-[11px] pl-2', panel)}>
            <Sidebar />
            <div className="ml-[6px] flex w-[10px] items-center">
              <div className="flex h-full w-[3px] items-center bg-linear-to-r from-[#d9e8fd] to-[#b9d5fb]">
                <svg width="3" height="5" viewBox="0 0 3 5" aria-hidden="true"><path d="M3 0v5L0 2.500z" fill="#15428b" /></svg>
              </div>
            </div>
            <section className="mb-[3px] flex min-w-0 flex-1 flex-col">
              <div role="tablist" className="flex h-[23px] items-end gap-px pl-[3px]">
                {viewTabs.map((tab) => (
                  <div key={tab} className="relative flex items-end">
                    <Tab label={tab} active={tab === viewTab} onClick={() => setViewTab(tab)} wide />
                    {tab === 'Oluşan Alsa İşlemler' && <Marker n={1} className="top-0 -left-[17px]" />}
                  </div>
                ))}
              </div>
              <div className={clsx('flex flex-1 flex-col pt-2 pr-[11px] pb-[11px] pl-2', panel)}>
                <div role="tablist" className="relative flex h-[23px] items-end gap-px pl-[3px]">
                  <Tab label="Liste Görünüm" active={listTab === 'Liste Görünüm'} onClick={() => setListTab('Liste Görünüm')} />
                  <Tab label="Ağaç Görünüm" active={listTab === 'Ağaç Görünüm'} onClick={() => setListTab('Ağaç Görünüm')} />
                  <Marker n={2} className="-top-[3px] -left-[7px]" />
                </div>
                <div className={clsx('flex flex-1 flex-col p-2', panel)}>
                  <OrdersGrid />
                </div>
              </div>
            </section>
          </div>
        </main>
      </div>
      <svg width="12" height="19" viewBox="0 0 12 19" className="absolute bottom-[6px] left-[564px] z-30" aria-hidden="true">
        <path d="M.5.5v15.500l3.500-3.500 2.500 6 2.500-1-2.500-5.500h5z" fill="#fff" stroke="#000" />
      </svg>
    </div>
  )
}

export default App
